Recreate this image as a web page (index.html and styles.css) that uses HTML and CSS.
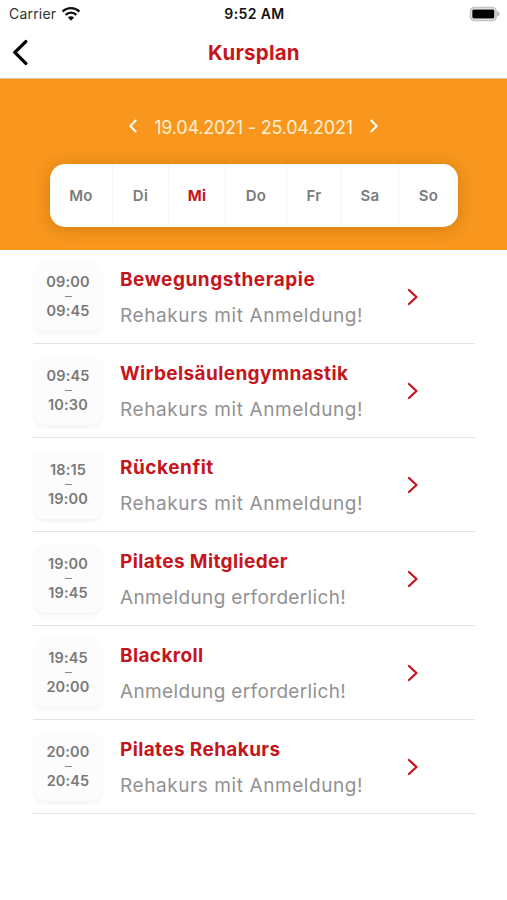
FILE: index.html
```html
<!DOCTYPE html>
<html lang="de">
<head>
<meta charset="utf-8">
<title>Kursplan</title>
<link rel="stylesheet" href="styles.css">
</head>
<body>
<div class="status">
  <div class="carrier"><span>Carrier</span>
    <svg width="20" height="16" viewBox="0 0 20 16" fill="none" stroke="#111" stroke-width="2.3"><path d="M1.6 5.6a12 12 0 0 1 16.8 0M4.6 8.9a7.6 7.6 0 0 1 10.8 0"/><path d="M10 14.7L6.9 11.6a4.4 4.4 0 0 1 6.2 0z" fill="#111" stroke="none"/></svg>
  </div>
  <span class="clock">9:52 AM</span>
  <svg class="battery" width="32" height="16" viewBox="0 0 32 16"><rect x="2.6" y="1.6" width="25.4" height="12.8" rx="3.6" fill="#fff" stroke="#c4c4c4" stroke-width="1.8"/><rect x="4.3" y="3.5" width="22" height="9" rx="1.4" fill="#000"/><path d="M29.2 5.2Q31.6 6.4 31.6 8T29.2 10.8z" fill="#b5b5b5"/></svg>
</div>
<header class="nav">
  <svg width="18" height="28" viewBox="0 0 18 28" fill="none" stroke="#000" stroke-width="3.3" stroke-linecap="round" stroke-linejoin="round"><path d="M15.8 2.6L4.8 13.4l11 11"/></svg>
  <h1>Kursplan</h1>
</header>
<section class="week">
  <div class="range">
    <svg width="10" height="16" viewBox="0 0 10 16"><path d="M7.7 2.5L2.3 8l5.4 5.5"/></svg>
    <span>19.04.2021 - 25.04.2021</span>
    <svg width="10" height="16" viewBox="0 0 10 16"><path d="M2.3 2.5L7.7 8l-5.4 5.5"/></svg>
  </div>
  <div class="days"><span>Mo</span><span>Di</span><span class="active">Mi</span><span>Do</span><span>Fr</span><span>Sa</span><span>So</span></div>
</section>
<main>
  <article><div class="time"><span>09:00</span><i></i><span>09:45</span></div><div class="info"><h2 class="wide">Bewegungstherapie</h2><p>Rehakurs mit Anmeldung!</p></div><svg width="12" height="18" viewBox="0 0 12 18"><path d="M2 2l7.5 7L2 16"/></svg></article>
  <article><div class="time"><span>09:45</span><i></i><span>10:30</span></div><div class="info"><h2>Wirbelsäulengymnastik</h2><p>Rehakurs mit Anmeldung!</p></div><svg width="12" height="18" viewBox="0 0 12 18"><path d="M2 2l7.5 7L2 16"/></svg></article>
  <article><div class="time"><span>18:15</span><i></i><span>19:00</span></div><div class="info"><h2 class="wide">Rückenfit</h2><p>Rehakurs mit Anmeldung!</p></div><svg width="12" height="18" viewBox="0 0 12 18"><path d="M2 2l7.5 7L2 16"/></svg></article>
  <article><div class="time"><span>19:00</span><i></i><span>19:45</span></div><div class="info"><h2>Pilates Mitglieder</h2><p class="tight">Anmeldung erforderlich!</p></div><svg width="12" height="18" viewBox="0 0 12 18"><path d="M2 2l7.5 7L2 16"/></svg></article>
  <article><div class="time"><span>19:45</span><i></i><span>20:00</span></div><div class="info"><h2>Blackroll</h2><p class="tight">Anmeldung erforderlich!</p></div><svg width="12" height="18" viewBox="0 0 12 18"><path d="M2 2l7.5 7L2 16"/></svg></article>
  <article><div class="time"><span>20:00</span><i></i><span>20:45</span></div><div class="info"><h2>Pilates Rehakurs</h2><p>Rehakurs mit Anmeldung!</p></div><svg width="12" height="18" viewBox="0 0 12 18"><path d="M2 2l7.5 7L2 16"/></svg></article>
</main>
</body>
</html>
```
FILE: styles.css
```css
* { box-sizing: border-box; }
body { margin: 0; height: 900px; background: #fff; font-family: Inter, "Liberation Sans", sans-serif; overflow: hidden; }
h1, h2, p { margin: 0; }
svg { display: block; flex: none; }
.status { display: grid; grid-template-columns: 1fr auto 1fr; align-items: center; height: 27px; padding: 0 7px 0 9px; font-size: 14px; color: #111; }
.carrier { display: flex; align-items: center; gap: 5px; color: #333; letter-spacing: 0.2px; }
.clock { font-weight: 600; letter-spacing: 0.4px; }
.battery { justify-self: end; }
.nav { display: grid; grid-template-columns: 18px 1fr 18px; align-items: center; height: 52px; padding: 0 10px; border-bottom: 1px solid #d9c7ad; }
.nav h1 { text-align: center; font-size: 20.5px; line-height: 28px; font-weight: 700; color: #c5161d; letter-spacing: 0.25px; padding-left: 1px; }
.week { height: 171px; background: #f8961d; padding-top: 38px; }
.range { display: flex; justify-content: center; align-items: center; gap: 16px; height: 20px; font-size: 18px; letter-spacing: -0.22px; color: #fff0d2; }
.range svg { fill: none; stroke: #fff; stroke-width: 2; stroke-linecap: round; stroke-linejoin: round; margin-top: -3px; }
.days { display: grid; grid-template-columns: 63px 56px 57px 61px 55px 57px 59px; width: 408px; height: 63px; margin: 27px 0 0 50px; background: #fff; border-radius: 15px; box-shadow: 0 2px 15px rgba(120, 70, 0, 0.32); }
.days span { display: flex; align-items: center; justify-content: center; padding-bottom: 1px; font-size: 15px; letter-spacing: 0.3px; font-weight: 600; color: #7b7b7b; border-right: 1px solid #f5f5f5; }
.days span:last-child { border: 0; }
.days .active { color: #c5161d; font-weight: 700; }
main { padding: 0 32px 0 33px; }
article { display: flex; height: 94px; padding-top: 13px; border-bottom: 1px solid #e2e2e2; }
.time { display: flex; flex-direction: column; align-items: center; width: 68px; height: 68px; margin-left: 1px; padding-top: 9px; border-radius: 10px; background: #fcfcfc; box-shadow: 0 2px 5px rgba(0, 0, 0, 0.06); font-size: 14.5px; line-height: 20px; font-weight: 600; letter-spacing: 0.15px; color: #797979; }
.time i { width: 7px; height: 1px; margin: 4px 0; background: #8a8a8a; }
.info { width: 287px; margin-left: 18px; padding-top: 4px; white-space: nowrap; }
.info h2 { font-size: 19px; line-height: 26px; font-weight: 700; letter-spacing: 0.37px; color: #c5161d; }
.info .wide { letter-spacing: 0.53px; }
.info p { margin-top: 11px; font-size: 19px; line-height: 24px; letter-spacing: 0.58px; color: #929292; font-weight: 400; }
.info .tight { letter-spacing: 0.36px; }
article > svg { margin-top: 25px; fill: none; stroke: #c5161d; stroke-width: 2.3; stroke-linecap: round; stroke-linejoin: round; }
```
